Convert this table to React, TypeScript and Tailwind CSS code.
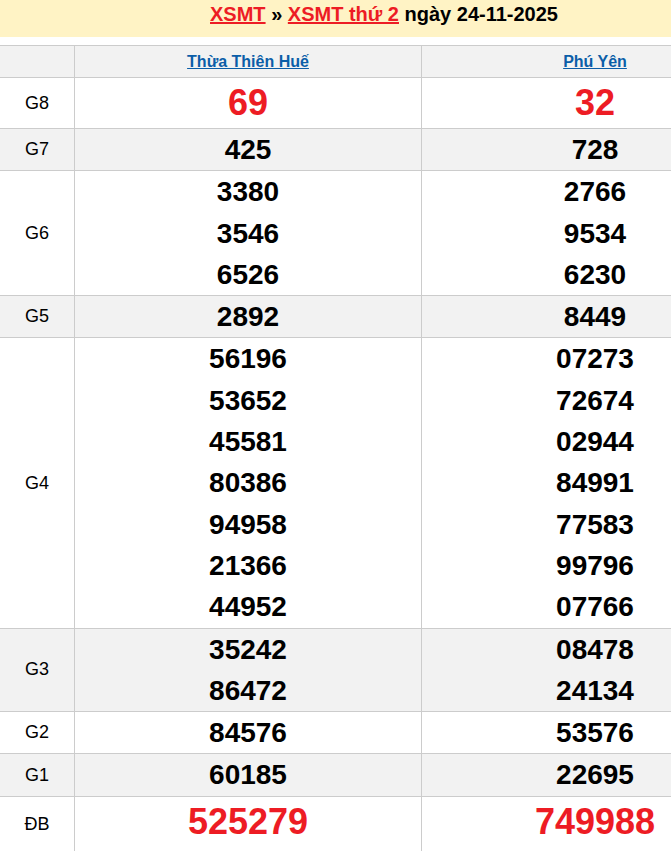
const provinces = ['Thừa Thiên Huế', 'Phú Yên'];

type Prize = {
  label: string;
  values: [string[], string[]];
  big?: boolean;
};

const prizes: Prize[] = [
  { label: 'G8', values: [['69'], ['32']], big: true },
  { label: 'G7', values: [['425'], ['728']] },
  { label: 'G6', values: [['3380', '3546', '6526'], ['2766', '9534', '6230']] },
  { label: 'G5', values: [['2892'], ['8449']] },
  {
    label: 'G4',
    values: [
      ['56196', '53652', '45581', '80386', '94958', '21366', '44952'],
      ['07273', '72674', '02944', '84991', '77583', '99796', '07766'],
    ],
  },
  { label: 'G3', values: [['35242', '86472'], ['08478', '24134']] },
  { label: 'G2', values: [['84576'], ['53576']] },
  { label: 'G1', values: [['60185'], ['22695']] },
  { label: 'ĐB', values: [['525279'], ['749988']], big: true },
];

export default function App() {
  return (
    <div
      className="w-full overflow-hidden bg-white"
      style={{ fontFamily: '"Liberation Sans", Arial, sans-serif' }}
    >
      <div className="w-[768px]">
        <div className="h-[37px] bg-[#fff3c5] pt-[3px] text-center text-[20px] font-bold leading-[23px] text-black">
          <a className="text-[#ed1c24] underline">XSMT</a> »{' '}
          <a className="text-[#ed1c24] underline">XSMT thứ 2</a> ngày 24-11-2025
        </div>

        <div className="mt-[8px] border-t border-[#cccccc]">
          <div className="grid grid-cols-[74px_347px_347px] border-b border-[#cccccc] bg-[#f2f2f2]">
            <div className="h-[31px]" />
            {provinces.map(p => (
              <div
                key={p}
                className="flex h-[31px] items-center justify-center border-l border-[#cccccc] text-[16px] font-bold text-[#0b5ea8]"
              >
                <a className="underline">{p}</a>
              </div>
            ))}
          </div>

          {prizes.map((row, i) => (
            <div
              key={row.label}
              className={`grid grid-cols-[74px_347px_347px] border-b border-[#cccccc] ${
                i % 2 == 1 ? 'bg-[#f2f2f2]' : 'bg-white'
              }`}
            >
              <div
                className={`flex justify-center text-[18px] text-black ${
                  row.label == 'ĐB' ? 'items-start pt-[14px]' : 'items-center'
                }`}
              >
                {row.label}
              </div>
              {row.values.map((col, n) => (
                <div
                  key={n}
                  className={`flex flex-col items-center border-l border-[#cccccc] font-bold ${
                    row.label == 'ĐB' ? 'pb-[12px]' : ''
                  }`}
                >
                  {col.map(v =>
                    row.big ? (
                      <div
                        key={v}
                        className="text-[36px] leading-[50px] text-[#ed1c24]"
                      >
                        {v}
                      </div>
                    ) : (
                      <div
                        key={v}
                        className="text-[28px] leading-[41.3px] text-black"
                      >
                        {v}
                      </div>
                    ),
                  )}
                </div>
              ))}
            </div>
          ))}
        </div>
      </div>
    </div>
  );
}
